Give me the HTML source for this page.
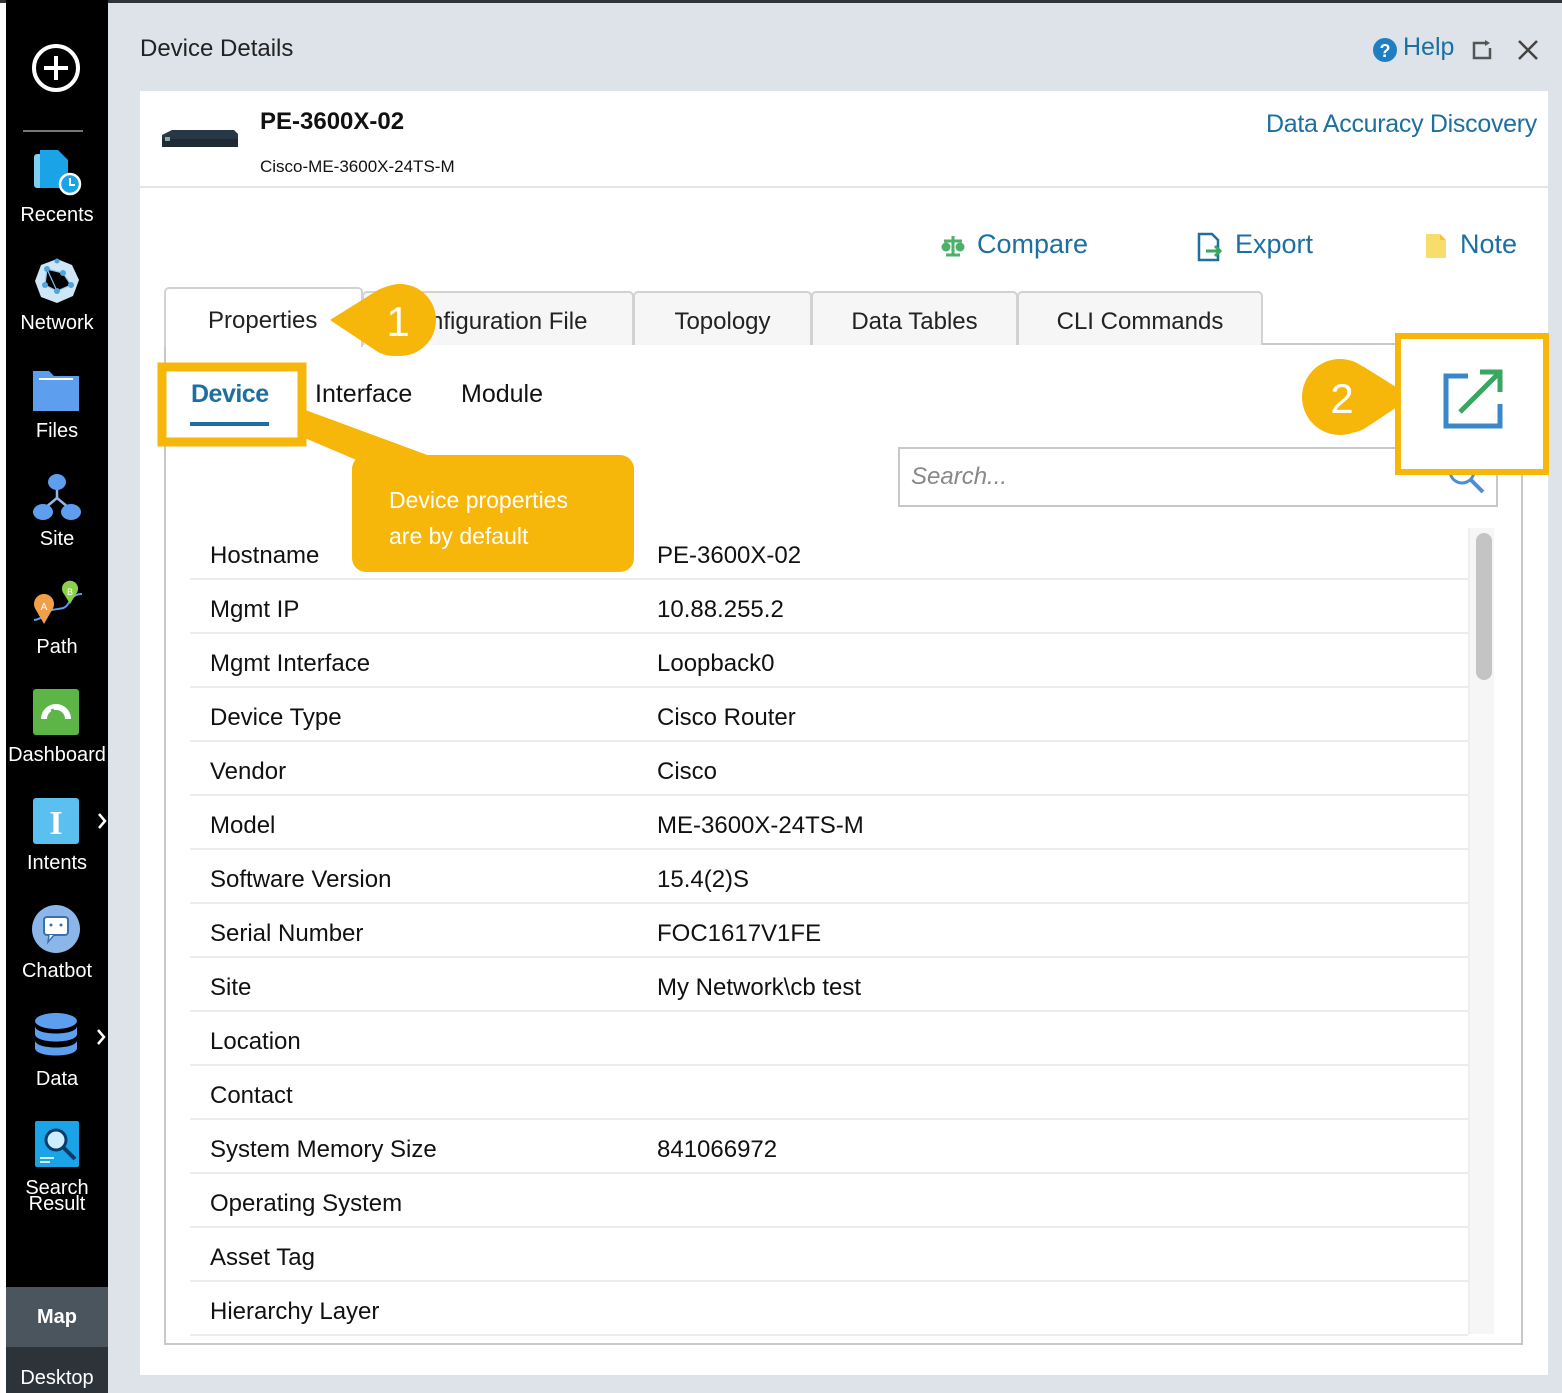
<!DOCTYPE html>
<html><head><meta charset="utf-8"><style>
*{margin:0;padding:0;box-sizing:border-box}
body{width:1562px;height:1393px;position:relative;overflow:hidden;background:#dde3e9;font-family:"Liberation Sans",sans-serif;color:#111}
.a{position:absolute}
.sb{left:6px;top:0;width:102px;height:1393px;background:#000}
.lbl{position:absolute;left:0;width:102px;text-align:center;color:#fff;font-size:20px}
.row{position:absolute;left:190px;width:1278px;height:54px;border-bottom:2px solid #ececec;font-size:24px}
.row span{position:absolute;top:16px}
.row .k{left:20px}.row .v{left:467px}
.tab{position:absolute;top:291px;height:54px;background:#f6f6f6;border:2px solid #d2d2d2;border-bottom:none;border-radius:5px 5px 0 0;font-size:24px;color:#222;text-align:center;line-height:58px}
.blue{color:#1d6fa0}
</style></head><body>
<div class="a" style="left:0;top:0;width:1562px;height:3px;background:#2f3439"></div>
<div class="a" style="left:0;top:3px;width:6px;height:1390px;background:#fff"></div>
<div class="a sb">
 <svg class="a" style="left:24px;top:42px" width="52" height="52" viewBox="0 0 52 52"><circle cx="26" cy="26" r="22" fill="none" stroke="#fff" stroke-width="4"/><path d="M26 14v24M14 26h24" stroke="#fff" stroke-width="4"/></svg>
 <div class="a" style="left:17px;top:130px;width:60px;height:2px;background:#777"></div>
 <svg class="a" style="left:26px;top:148px" width="50" height="50"><rect x="2" y="6" width="26" height="34" rx="3" fill="#7fd0f0"/><path d="M8 2h18l10 10v28H8z" fill="#1aa3e6"/><circle cx="38" cy="36" r="10" fill="#1aa3e6" stroke="#fff" stroke-width="2.5"/><path d="M38 30v7h5" stroke="#fff" stroke-width="2" fill="none"/></svg>
 <div class="lbl" style="top:204px">Recents</div>
 <svg class="a" style="left:27px;top:257px" width="48" height="48"><polygon points="24,2 39,8 46,23 40,39 24,46 8,40 2,24 8,8" fill="#cfe6f7"/><g stroke="#8cc4ea" stroke-width="1.2"><path d="M14 12L30 16L38 28L24 34L12 28Z M14 12L24 34"/></g><g fill="#4ea4dc"><circle cx="14" cy="12" r="3"/><circle cx="30" cy="16" r="3"/><circle cx="38" cy="28" r="3"/><circle cx="24" cy="34" r="3"/><circle cx="12" cy="28" r="3"/><circle cx="24" cy="4" r="2.5"/></g></svg>
 <div class="lbl" style="top:312px">Network</div>
 <svg class="a" style="left:25px;top:365px" width="50" height="48"><path d="M2 6h16l5 5h25v35H2z" fill="#5b9ef0"/><path d="M8 14h34" stroke="#fff" stroke-width="2"/><rect x="2" y="17" width="46" height="29" rx="3" fill="#5d9eee"/></svg>
 <div class="lbl" style="top:420px">Files</div>
 <svg class="a" style="left:25px;top:472px" width="52" height="50"><path d="M26 14V26M26 26L14 36M26 26L38 36" stroke="#8fb8e8" stroke-width="2.5"/><ellipse cx="26" cy="10" rx="9" ry="8" fill="#5d9eee"/><ellipse cx="12" cy="40" rx="10" ry="8" fill="#5d9eee"/><ellipse cx="40" cy="40" rx="10" ry="8" fill="#5d9eee"/></svg>
 <div class="lbl" style="top:528px">Site</div>
 <svg class="a" style="left:24px;top:580px" width="54" height="50"><path d="M4 40c8 0 10-8 18-10s12 0 16-6 6-10 14-10" stroke="#5d9eee" stroke-width="2" fill="none"/><path d="M14 44L6 30a10 10 0 1 1 16 0z" fill="#f0a04b"/><text x="14" y="30" font-size="10" fill="#fff" text-anchor="middle">A</text><path d="M40 24L34 14a8 8 0 1 1 12 0z" fill="#8ccf4a"/><text x="40" y="15" font-size="9" fill="#fff" text-anchor="middle">B</text></svg>
 <div class="lbl" style="top:636px">Path</div>
 <svg class="a" style="left:27px;top:689px" width="46" height="46"><rect width="46" height="46" rx="3" fill="#5db548"/><path d="M11 30a12 12 0 0 1 24 0" stroke="#fff" stroke-width="6" fill="none"/><path d="M23 30l-4-10" stroke="#5db548" stroke-width="3"/></svg>
 <div class="lbl" style="top:744px">Dashboard</div>
 <svg class="a" style="left:27px;top:798px" width="80" height="46"><rect width="46" height="46" rx="3" fill="#5bc0ef"/><text x="23" y="36" font-size="34" font-weight="bold" fill="#fff" text-anchor="middle" font-family="Liberation Serif">I</text><path d="M66 16l6 7-6 7" stroke="#fff" stroke-width="2.5" fill="none"/></svg>
 <div class="lbl" style="top:852px">Intents</div>
 <svg class="a" style="left:25px;top:904px" width="50" height="50"><circle cx="25" cy="25" r="24" fill="#8cb6ea"/><rect x="13" y="13" width="24" height="18" rx="3" fill="#fff" stroke="#3a6fb0" stroke-width="2"/><path d="M18 31l-1 7 6-7" fill="#fff" stroke="#3a6fb0" stroke-width="1.5"/><circle cx="20" cy="21" r="1.5" fill="#3a6fb0"/><circle cx="30" cy="21" r="1.5" fill="#3a6fb0"/></svg>
 <div class="lbl" style="top:960px">Chatbot</div>
 <svg class="a" style="left:28px;top:1012px" width="80" height="52"><ellipse cx="22" cy="9" rx="21" ry="8" fill="#5d9eee"/><path d="M1 14c0 10 42 10 42 0v8c0 10-42 10-42 0z" fill="#5d9eee"/><path d="M1 28c0 10 42 10 42 0v8c0 10-42 10-42 0z" fill="#5d9eee"/><path d="M64 18l6 7-6 7" stroke="#fff" stroke-width="2.5" fill="none"/></svg>
 <div class="lbl" style="top:1068px">Data</div>
 <svg class="a" style="left:28px;top:1120px" width="48" height="50"><rect x="1" y="1" width="44" height="46" rx="2" fill="#1aa3e6"/><circle cx="22" cy="20" r="10" fill="#cdeefc" stroke="#0a3b6b" stroke-width="3"/><path d="M29 27l12 12" stroke="#0a3b6b" stroke-width="4"/><path d="M6 38h14M6 42h10" stroke="#cdeefc" stroke-width="2"/></svg>
 <div class="lbl" style="top:1180px;line-height:16px">Search<br>Result</div>
 <div class="a" style="left:0;top:1287px;width:102px;height:60px;background:#4b555d"></div>
 <div class="lbl" style="top:1306px;font-weight:bold">Map</div>
 <div class="a" style="left:0;top:1347px;width:102px;height:46px;background:#2c343a"></div>
 <div class="lbl" style="top:1367px">Desktop</div>
</div>

<div class="a" style="left:140px;top:35px;font-size:24px;color:#222">Device Details</div>
<svg class="a" style="left:1372px;top:37px" width="26" height="26"><circle cx="13" cy="13" r="12" fill="#1f7ec2"/><text x="13" y="20" font-size="18" font-weight="bold" fill="#fff" text-anchor="middle">?</text></svg>
<div class="a blue" style="left:1403px;top:33px;font-size:25px">Help</div>
<svg class="a" style="left:1470px;top:38px" width="24" height="24"><path d="M18 5H4v15h5" stroke="#555" stroke-width="2.5" fill="none"/><path d="M9 20h11V10" stroke="#555" stroke-width="2.5" fill="none"/><path d="M15 2l5 3-5 3z" fill="#555"/></svg>
<svg class="a" style="left:1517px;top:39px" width="22" height="22"><path d="M2 2l18 18M20 2L2 20" stroke="#444" stroke-width="2.5"/></svg>

<div class="a" style="left:140px;top:91px;width:1408px;height:1284px;background:#fff"></div>
<div class="a" style="left:140px;top:186px;width:1408px;height:2px;background:#e4e6e8"></div>
<svg class="a" style="left:160px;top:127px" width="80" height="22"><path d="M2 8l10-5h62l4 4v9H2z" fill="#263845"/><rect x="2" y="12" width="76" height="8" fill="#1b2a35"/><rect x="5" y="10" width="5" height="4" fill="#8aa"/></svg>
<div class="a" style="left:260px;top:108px;font-size:24px;font-weight:bold">PE-3600X-02</div>
<div class="a" style="left:260px;top:157px;font-size:17px">Cisco-ME-3600X-24TS-M</div>
<div class="a blue" style="left:1266px;top:110px;font-size:25px;letter-spacing:-0.3px">Data Accuracy Discovery</div>

<svg class="a" style="left:940px;top:233px" width="26" height="26"><path d="M13 3v20M6 22h14M4 8h18" stroke="#4caf6a" stroke-width="3"/><circle cx="6" cy="14" r="4.5" fill="#4caf6a"/><circle cx="20" cy="14" r="4.5" fill="#4caf6a"/></svg>
<div class="a blue" style="left:977px;top:229px;font-size:27px">Compare</div>
<svg class="a" style="left:1196px;top:232px" width="28" height="30"><path d="M3 2h13l6 6v20H3z" fill="#fff" stroke="#1d6fa0" stroke-width="2.5"/><path d="M10 19h14M19 14l5 5-5 5" stroke="#3aa660" stroke-width="3" fill="none"/></svg>
<div class="a blue" style="left:1235px;top:229px;font-size:27px">Export</div>
<svg class="a" style="left:1424px;top:232px" width="24" height="28"><path d="M2 2h14l6 6v18H2z" fill="#f8dc6c"/><path d="M16 2v6h6" fill="#f0c43a"/></svg>
<div class="a blue" style="left:1460px;top:229px;font-size:27px">Note</div>

<div class="a" style="left:164px;top:343px;width:1359px;height:1002px;border:2px solid #c8c8c8;border-top:none"></div>
<div class="a" style="left:1262px;top:343px;width:261px;height:2px;background:#c8c8c8"></div>
<div class="tab" style="left:164px;top:287px;width:199px;height:60px;background:#fff;line-height:64px;text-align:left;padding-left:42px">Properties</div>
<div class="tab" style="left:362px;width:272px;text-align:left;padding-left:66px">nfiguration File</div>
<div class="tab" style="left:633px;width:179px">Topology</div>
<div class="tab" style="left:811px;width:207px">Data Tables</div>
<div class="tab" style="left:1017px;width:246px">CLI Commands</div>

<div class="a" style="left:191px;top:380px;font-size:25px;font-weight:bold;color:#1d6fa0;letter-spacing:-0.5px">Device</div>
<div class="a" style="left:190px;top:422px;width:79px;height:4px;background:#1d6fa0"></div>
<div class="a" style="left:315px;top:380px;font-size:25px">Interface</div>
<div class="a" style="left:461px;top:380px;font-size:25px">Module</div>

<div class="a" style="left:898px;top:447px;width:600px;height:60px;border:2px solid #c8c8c8"></div>
<div class="a" style="left:911px;top:463px;font-size:24px;font-style:italic;color:#888">Search...</div>
<svg class="a" style="left:1440px;top:455px" width="50" height="45"><circle cx="22" cy="16" r="12" stroke="#4b8fd0" stroke-width="3" fill="none"/><path d="M31 25l12 12" stroke="#4b8fd0" stroke-width="4"/></svg>

<div class="a" style="left:1468px;top:528px;width:26px;height:806px;background:#f6f6f6;border-left:2px solid #eee"></div>
<div class="a" style="left:1476px;top:533px;width:16px;height:147px;background:#c4c4c4;border-radius:8px"></div>

<div class="row" style="top:526px"><span class="k">Hostname</span><span class="v">PE-3600X-02</span></div>
<div class="row" style="top:580px"><span class="k">Mgmt IP</span><span class="v">10.88.255.2</span></div>
<div class="row" style="top:634px"><span class="k">Mgmt Interface</span><span class="v">Loopback0</span></div>
<div class="row" style="top:688px"><span class="k">Device Type</span><span class="v">Cisco Router</span></div>
<div class="row" style="top:742px"><span class="k">Vendor</span><span class="v">Cisco</span></div>
<div class="row" style="top:796px"><span class="k">Model</span><span class="v">ME-3600X-24TS-M</span></div>
<div class="row" style="top:850px"><span class="k">Software Version</span><span class="v">15.4(2)S</span></div>
<div class="row" style="top:904px"><span class="k">Serial Number</span><span class="v">FOC1617V1FE</span></div>
<div class="row" style="top:958px"><span class="k">Site</span><span class="v">My Network\cb test</span></div>
<div class="row" style="top:1012px"><span class="k">Location</span></div>
<div class="row" style="top:1066px"><span class="k">Contact</span></div>
<div class="row" style="top:1120px"><span class="k">System Memory Size</span><span class="v">841066972</span></div>
<div class="row" style="top:1174px"><span class="k">Operating System</span></div>
<div class="row" style="top:1228px"><span class="k">Asset Tag</span></div>
<div class="row" style="top:1282px"><span class="k">Hierarchy Layer</span></div>

<svg class="a" style="left:0;top:0" width="1562" height="1393">
 <g fill="#f6b60a">
  <path d="M330 320L378 290A35 35 0 1 1 378 352Z"/>
  <circle cx="400" cy="320" r="36"/>
  <path d="M1412 397L1364 367A35 35 0 1 0 1364 429Z"/>
  <circle cx="1340" cy="397" r="38"/>
  <path d="M300 408L430 456L520 456L380 470L300 436Z"/>
  <rect x="352" y="455" width="282" height="117" rx="14"/>
 </g>
 <rect x="162" y="367" width="140" height="75" fill="none" stroke="#f6b60a" stroke-width="9"/>
 <rect x="1398" y="336" width="148" height="136" fill="#fff" stroke="#f6b60a" stroke-width="6"/>
 <path d="M1468 376h-22v50h54v-22" stroke="#3a88c8" stroke-width="5" fill="none"/>
 <path d="M1460 412L1498 374M1480 372h20v20" stroke="#3aa660" stroke-width="5" fill="none"/>
 <text x="398" y="336" font-size="42" fill="#fff" text-anchor="middle" font-family="Liberation Sans">1</text>
 <text x="1342" y="413" font-size="42" fill="#fff" text-anchor="middle" font-family="Liberation Sans">2</text>
 <text x="389" y="508" font-size="23" fill="#fff" font-family="Liberation Sans">Device properties</text>
 <text x="389" y="544" font-size="23" fill="#fff" font-family="Liberation Sans">are by default</text>
</svg>
</body></html>
